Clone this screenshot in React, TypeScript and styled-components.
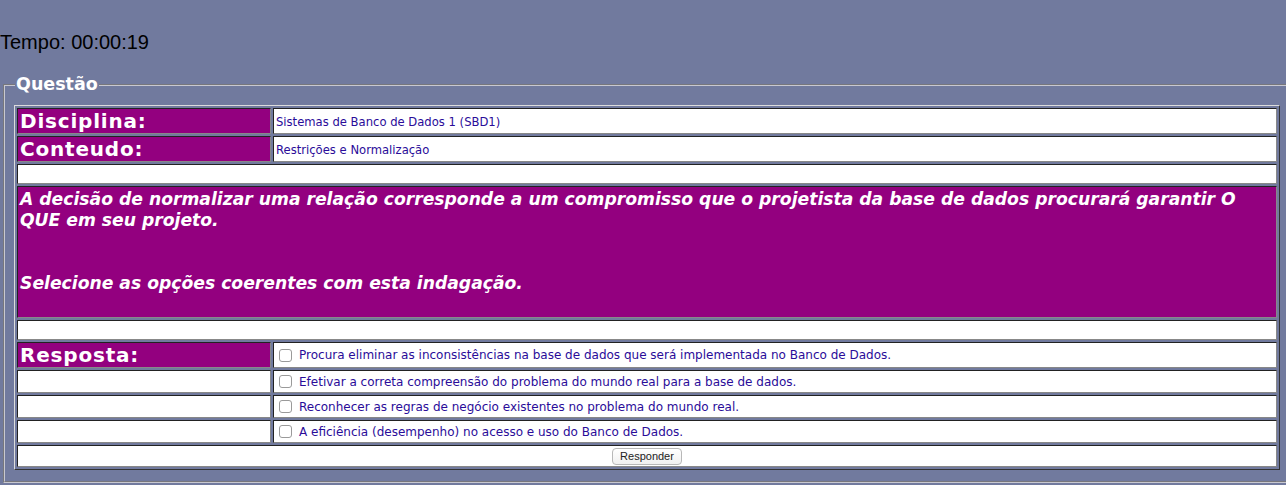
import React from "react";
import styled, { createGlobalStyle } from "styled-components";

const GlobalStyle = createGlobalStyle`
  html, body {
    margin: 0;
    padding: 0;
    background: #717a9e;
    overflow: hidden;
  }
  body {
    font-family: "Liberation Sans", Arial, sans-serif;
  }
`;

const Timer = styled.div`
  padding-top: 31px;
  height: 22px;
  font-size: 20px;
  line-height: 22px;
  color: #000;
`;

const Fieldset = styled.fieldset`
  margin: 21px 0 0 3px;
  padding: 0 10px 11px 9px;
  width: 1300px;
  border: 2px groove #c8c8d0;
  border-right: none;
  box-sizing: border-box;
`;

const Legend = styled.legend`
  padding: 0 1px;
  font-family: "DejaVu Sans", Verdana, sans-serif;
  font-weight: bold;
  font-size: 17.5px;
  line-height: 21px;
  color: #fff;
  margin-left: 1px;
`;

const Table = styled.table`
  margin-top: 10px;
  width: 1266px;
  border-collapse: separate;
  border-spacing: 2px;
  border: 1px solid;
  border-color: #dcdcdc #333 #333 #dcdcdc;
  background: #717a9e;
  font-family: "DejaVu Sans", Verdana, sans-serif;
`;

const Cell = styled.td<{ $purple?: boolean; $w?: number }>`
  padding: 1px 2px;
  border: 1px solid;
  border-color: #222 #888 #888 #222;
  background: ${(p) => (p.$purple ? "#93007f" : "#fff")};
  width: ${(p) => (p.$w ? `${p.$w}px` : "auto")};
  vertical-align: middle;
`;

const Label = styled.span`
  font-weight: bold;
  font-size: 20px;
  letter-spacing: 0.8px;
  line-height: 22px;
  color: #fff;
`;

const Value = styled.span`
  font-size: 11.6px;
  line-height: 20px;
  color: #2a0c99;
`;

const Blank = styled.div`
  height: 16px;
`;

const Question = styled.div`
  min-height: 127px;
  font-weight: bold;
  font-style: italic;
  font-size: 17.2px;
  line-height: 21px;
  color: #fff;
  padding-top: 1px;
`;

const Option = styled.label`
  display: flex;
  align-items: center;
  height: 19px;
  font-size: 12px;
  color: #2a0c99;
`;

const Box = styled.span`
  display: inline-block;
  width: 11px;
  height: 11px;
  margin: 0 7px 0 3px;
  border: 1px solid #9a9a9a;
  border-radius: 3px;
  background: #fff;
  flex-shrink: 0;
`;

const Footer = styled.div`
  display: flex;
  justify-content: center;
  height: 18px;
  align-items: center;
`;

const Button = styled.button`
  font-family: "Liberation Sans", Arial, sans-serif;
  font-size: 11px;
  height: 17px;
  padding: 0 7px;
  border: 1px solid #b8b8b8;
  border-radius: 4px;
  background: linear-gradient(#fff, #f0f0f0);
  color: #222;
  line-height: 15px;
`;

const options = [
  "Procura eliminar as inconsistências na base de dados que será implementada no Banco de Dados.",
  "Efetivar a correta compreensão do problema do mundo real para a base de dados.",
  "Reconhecer as regras de negócio existentes no problema do mundo real.",
  "A eficiência (desempenho) no acesso e uso do Banco de Dados.",
];

export default function App() {
  return (
    <>
      <GlobalStyle />
      <Timer>Tempo: 00:00:19</Timer>
      <Fieldset>
        <Legend>Questão</Legend>
        <Table>
          <tbody>
            <tr>
              <Cell $purple $w={248}>
                <Label>Disciplina:</Label>
              </Cell>
              <Cell>
                <Value>Sistemas de Banco de Dados 1 (SBD1)</Value>
              </Cell>
            </tr>
            <tr>
              <Cell $purple>
                <Label>Conteudo:</Label>
              </Cell>
              <Cell>
                <Value>Restrições e Normalização</Value>
              </Cell>
            </tr>
            <tr>
              <Cell colSpan={2}>
                <Blank />
              </Cell>
            </tr>
            <tr>
              <Cell $purple colSpan={2}>
                <Question>
                  A decisão de normalizar uma relação corresponde a um compromisso que o projetista da
                  base de dados procurará garantir O QUE em seu projeto.
                  <br />
                  <br />
                  <br />
                  Selecione as opções coerentes com esta indagação.
                </Question>
              </Cell>
            </tr>
            <tr>
              <Cell colSpan={2}>
                <Blank />
              </Cell>
            </tr>
            {options.map((text, i) => (
              <tr key={i}>
                <Cell $purple={i === 0}>{i === 0 && <Label>Resposta:</Label>}</Cell>
                <Cell>
                  <Option>
                    <Box />
                    {text}
                  </Option>
                </Cell>
              </tr>
            ))}
            <tr>
              <Cell colSpan={2}>
                <Footer>
                  <Button>Responder</Button>
                </Footer>
              </Cell>
            </tr>
          </tbody>
        </Table>
      </Fieldset>
    </>
  );
}
